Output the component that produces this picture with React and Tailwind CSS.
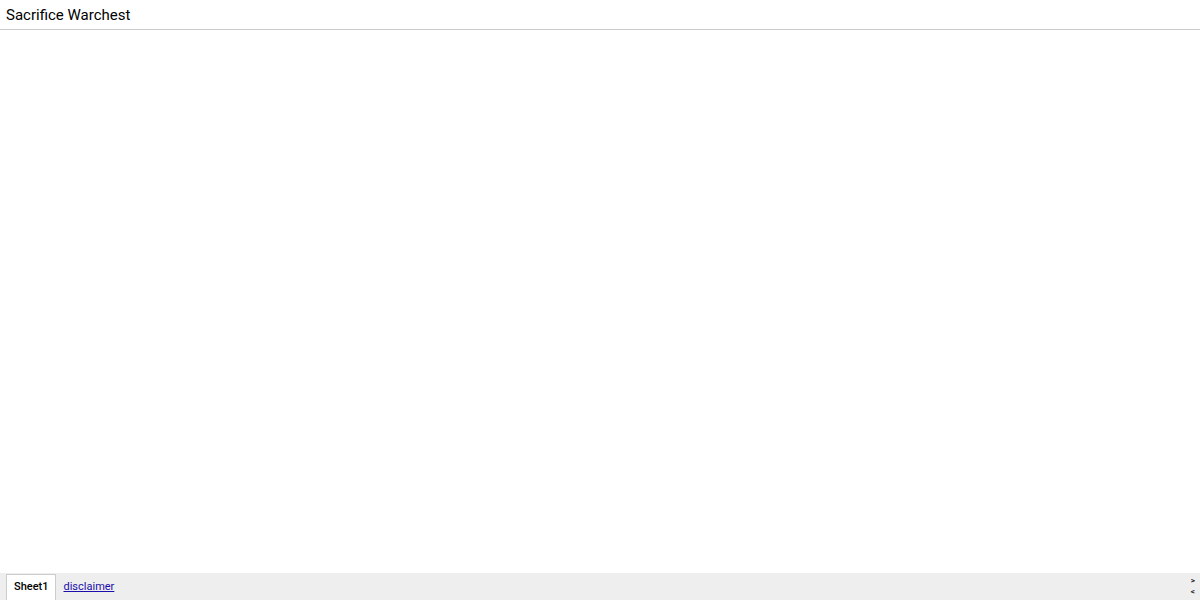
export default function App() {
  return (
    <div className="w-[1200px] h-[600px] flex flex-col bg-white overflow-hidden" style={{ fontFamily: "Roboto, 'Liberation Sans', sans-serif" }}>
      <div className="h-[30px] shrink-0 border-b border-[#cccccc] flex items-center px-[6px] pt-[2px]">
        <span className="text-[15px] text-[#000] leading-none">Sacrifice Warchest</span>
      </div>
      <div className="flex-1" />
      <div className="h-[27px] shrink-0 bg-[#eeeeee] flex items-stretch pl-[6px] pt-[1px] relative">
        <div className="bg-white border-x border-t border-[#cccccc] px-[7px] flex items-center text-[11px] font-medium text-[#000]">Sheet1</div>
        <a href="#" className="flex items-center px-[7px] text-[11px] text-[#1a0dab] underline">disclaimer</a>
        <div className="absolute right-[5px] top-[2px] flex flex-col text-[8px] leading-[11px] text-[#222] font-bold">
          <span>&gt;</span>
          <span>&lt;</span>
        </div>
      </div>
    </div>
  );
}
